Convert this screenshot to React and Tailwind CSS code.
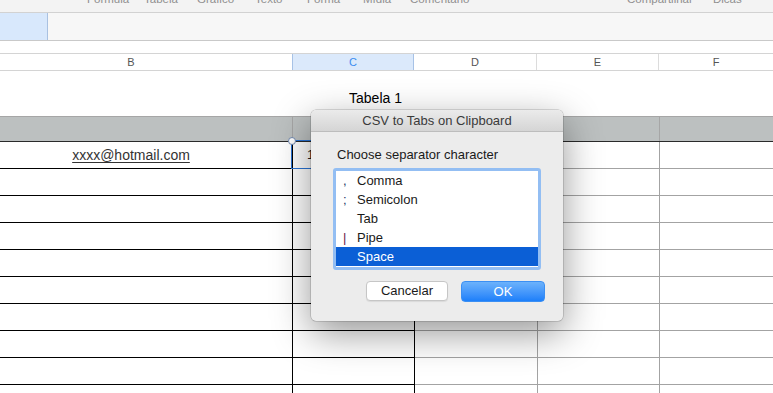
import React from "react";

const toolbar = [
  ["Fórmula", "w-[57px]"],
  ["Tabela", "w-[53px]"],
  ["Gráfico", "w-[58px]"],
  ["Texto", "w-[52px]"],
  ["Forma", "w-[56px]"],
  ["Mídia", "w-[47px]"],
  ["Comentário", "w-[217px]"],
  ["Compartilhar", "w-[86px]"],
  ["Dicas", "w-[50px]"],
];

const items = [
  { g: ",", c: "text-[#1d3766]", label: "Comma" },
  { g: ";", c: "text-[#1d3766]", label: "Semicolon" },
  { g: "", c: "", label: "Tab" },
  { g: "|", c: "text-[#6a1c4c]", label: "Pipe" },
  { g: "", c: "", label: "Space", sel: true },
];

function Row({ first }) {
  return (
    <div className="flex h-[27px]">
      <div className="w-[323px] -ml-[30px] shrink-0 border-r border-b border-black flex items-center justify-center">
        {first && (
          <span className="text-[14px] text-[#333] underline underline-offset-2">xxxx@hotmail.com</span>
        )}
      </div>
      <div className="relative w-[122px] shrink-0 border-r border-b border-black flex items-center pl-[14px]">
        {first && (
          <>
            <span className="text-[13px] text-[#222]">1</span>
            <div className="absolute left-[-2px] top-[-2px] w-[124px] h-[29px] border border-[#2a74d6]" />
            <div className="absolute left-[-5px] top-[-5px] w-[8px] h-[8px] rounded-full bg-white border border-[#7088b0]" />
          </>
        )}
      </div>
      <div className="w-[123px] shrink-0 border-r border-b border-[#a3a3a3]" />
      <div className="w-[122px] shrink-0 border-r border-b border-[#a3a3a3]" />
      <div className="flex-1 border-b border-[#a3a3a3]" />
    </div>
  );
}

export default function App() {
  return (
    <div className="relative w-[773px] h-[393px] overflow-hidden bg-white font-['Liberation_Sans',Arial,sans-serif]">
      {/* toolbar */}
      <div className="h-[13px] bg-[#f3f3f3] border-b border-[#d2d2d2] overflow-hidden">
        <div className="flex mt-[-7px] pl-[87px] text-[11.5px] leading-[12px] text-[#8f8f8f]">
          {toolbar.map(([t, w]) => (
            <div key={t} className={`${w} shrink-0`}>{t}</div>
          ))}
        </div>
      </div>
      {/* formula bar */}
      <div className="flex h-[28px] bg-[#f7f7f7] border-b border-[#c9c9c9]">
        <div className="w-[48px] bg-[#d8e8fc] border-r border-[#a9c1e1]" />
        <div className="flex-1" />
      </div>
      <div className="h-[12px]" />
      {/* column headers */}
      <div className="flex h-[18px] border-y border-[#d4d4d4] text-[11px] text-[#555]">
        <div className="w-[323px] -ml-[30px] shrink-0 border-r border-[#dcdcdc] flex items-center justify-center">B</div>
        <div className="w-[122px] shrink-0 bg-[#dbe9fb] border-r border-l border-[#a7c2e6] -ml-px flex items-center justify-center text-[#3c8cf0]">C</div>
        <div className="w-[123px] shrink-0 border-r border-[#dcdcdc] flex items-center justify-center">D</div>
        <div className="w-[122px] shrink-0 border-r border-[#dcdcdc] flex items-center justify-center">E</div>
        <div className="flex-1 flex items-center justify-center">F</div>
      </div>
      {/* table title */}
      <div className="h-[45px] flex items-end justify-center pb-[7px]">
        <span className="ml-[-22px] text-[14px] text-black">Tabela 1</span>
      </div>
      {/* table header */}
      <div className="flex h-[26px] bg-[#bcc0c0] border-t border-[#a6a6a6] border-b border-b-[#2a2a2a]">
        <div className="w-[323px] -ml-[30px] shrink-0 border-r border-[#a6a6a6]" />
        <div className="w-[122px] shrink-0 border-r border-[#a6a6a6]" />
        <div className="w-[123px] shrink-0 border-r border-[#a6a6a6]" />
        <div className="w-[122px] shrink-0 border-r border-[#a6a6a6]" />
        <div className="flex-1" />
      </div>
      {Array.from({ length: 10 }).map((_, i) => (
        <Row key={i} first={i === 0} />
      ))}

      {/* dialog */}
      <div className="absolute left-[311px] top-[110px] w-[252px] h-[211px] rounded-[5px] bg-[#ececec] shadow-[0_12px_38px_rgba(0,0,0,0.42),0_0_0_0.5px_rgba(0,0,0,0.25)] overflow-hidden">
        <div className="h-[22px] flex items-center justify-center bg-gradient-to-b from-[#ebebeb] to-[#d5d5d5] border-b border-[#bdbdbd] text-[13px] text-[#3a3a3a]">
          CSV to Tabs on Clipboard
        </div>
        <div className="pt-[15px] pl-[26px] text-[13px] leading-[16px] text-[#1a1a1a]">Choose separator character</div>
        <div className="mt-[5px] ml-[22px] w-[208px] border-[3px] border-[#93bef3] rounded-[3px] bg-white pb-[1px]">
          {items.map((it) => (
            <div
              key={it.label}
              className={`flex items-center h-[19px] text-[13px] ${it.sel ? "bg-[#0b5fd6] text-white" : "text-[#1a1a1a]"}`}
            >
              <span className={`w-[21px] pl-[7px] shrink-0 ${it.c}`}>{it.g}</span>
              <span>{it.label}</span>
            </div>
          ))}
        </div>
        <div className="mt-[11px] flex justify-end items-start gap-[13px] pr-[18px]">
          <button className="w-[82px] h-[20px] rounded-[4px] bg-white border border-[#c6c6c6] shadow-[0_1px_1px_rgba(0,0,0,0.08)] text-[13px] text-[#1a1a1a] flex items-center justify-center">
            Cancelar
          </button>
          <button className="w-[84px] h-[21px] rounded-[4px] bg-gradient-to-b from-[#6cb2fb] to-[#1b7ffa] border border-[#3b8ff3] text-[13px] text-white flex items-center justify-center">
            OK
          </button>
        </div>
      </div>
    </div>
  );
}
